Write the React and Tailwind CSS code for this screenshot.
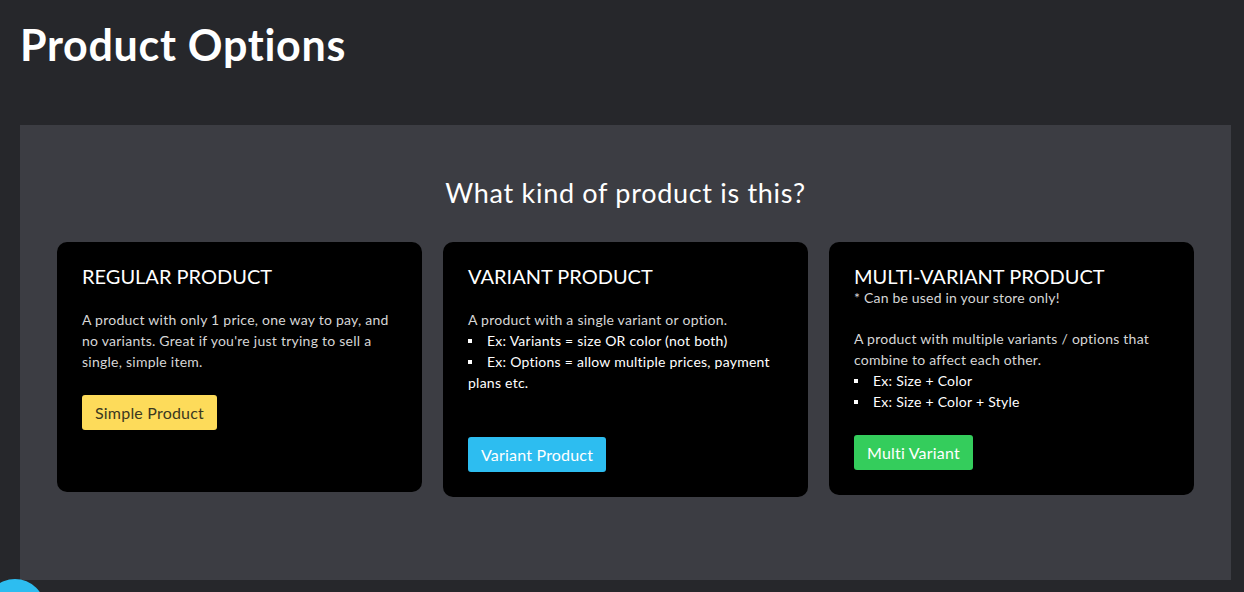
import React from "react";

const Bullet = ({ children }) => (
  <li className="flex items-start">
    <span className="mt-[9px] mr-[15px] h-[4px] w-[4px] shrink-0 bg-white" />
    <span>{children}</span>
  </li>
);

const App = () => {
  return (
    <div className="relative h-[592px] w-full overflow-hidden bg-[#26272b] font-['Lato',sans-serif] text-white">
      <h1 className="pl-[20px] pt-[17px] text-[43px] font-bold leading-[56px] tracking-[0.7px]">Product Options</h1>

      <div className="mx-[20px] mt-[52px] mr-[13px] h-[455px] bg-[#3c3d43] px-[37px] pt-[48px]">
        <h2 className="text-center text-[27px] font-normal leading-[40px] tracking-[0.7px] text-white">What kind of product is this?</h2>

        <div className="mt-[29px] grid grid-cols-3 items-start gap-[21px] text-[14px] leading-[21px] tracking-[0.25px]">
          {/* Regular */}
          <div className="rounded-[10px] bg-black px-[25px] pt-[21px] pb-[62px]">
            <h3 className="text-[20px] leading-[26px] font-normal uppercase tracking-normal">Regular Product</h3>
            <p className="mt-[20px] text-[#d6d6d6]">
              A product with only 1 price, one way to pay, and no variants. Great if you're just trying to sell a single, simple item.
            </p>
            <button className="mt-[23px] h-[35px] rounded-[3px] bg-[#fddb5a] px-[13px] text-[16px] tracking-[0.2px] text-[#3b381f]">Simple Product</button>
          </div>

          {/* Variant */}
          <div className="rounded-[10px] bg-black px-[25px] pt-[21px] pb-[25px]">
            <h3 className="text-[20px] leading-[26px] font-normal uppercase tracking-normal">Variant Product</h3>
            <div className="mt-[20px]">
              <p className="text-[#d6d6d6]">A product with a single variant or option.</p>
              <ul>
                <Bullet>Ex: Variants = size OR color (not both)</Bullet>
                <li className="block">
                  <span className="mb-[3px] mr-[15px] inline-block h-[4px] w-[4px] bg-white align-middle" />
                  Ex: Options = allow multiple prices, payment plans etc.
                </li>
              </ul>
            </div>
            <button className="mt-[44px] h-[35px] rounded-[3px] bg-[#2dbdf0] px-[13px] text-[16px] tracking-[0.2px] text-white">Variant Product</button>
          </div>

          {/* Multi-variant */}
          <div className="rounded-[10px] bg-black px-[25px] pt-[21px] pb-[25px]">
            <h3 className="text-[20px] leading-[26px] font-normal uppercase tracking-normal">Multi-Variant Product</h3>
            <p className="text-[14px] leading-[18px] tracking-[0.2px] text-[#d6d6d6]">* Can be used in your store only!</p>
            <div className="mt-[21px]">
              <p className="text-[#d6d6d6]">A product with multiple variants / options that combine to affect each other.</p>
              <ul>
                <Bullet>Ex: Size + Color</Bullet>
                <Bullet>Ex: Size + Color + Style</Bullet>
              </ul>
            </div>
            <button className="mt-[23px] h-[35px] rounded-[3px] bg-[#34cd5c] px-[13px] text-[16px] tracking-[0.2px] text-white">Multi Variant</button>
          </div>
        </div>
      </div>

      {/* chat launcher peeking in */}
      <div className="absolute left-[-15px] top-[579px] h-[60px] w-[60px] rounded-full bg-[#2dbdf0]" />
    </div>
  );
};

export default App;
